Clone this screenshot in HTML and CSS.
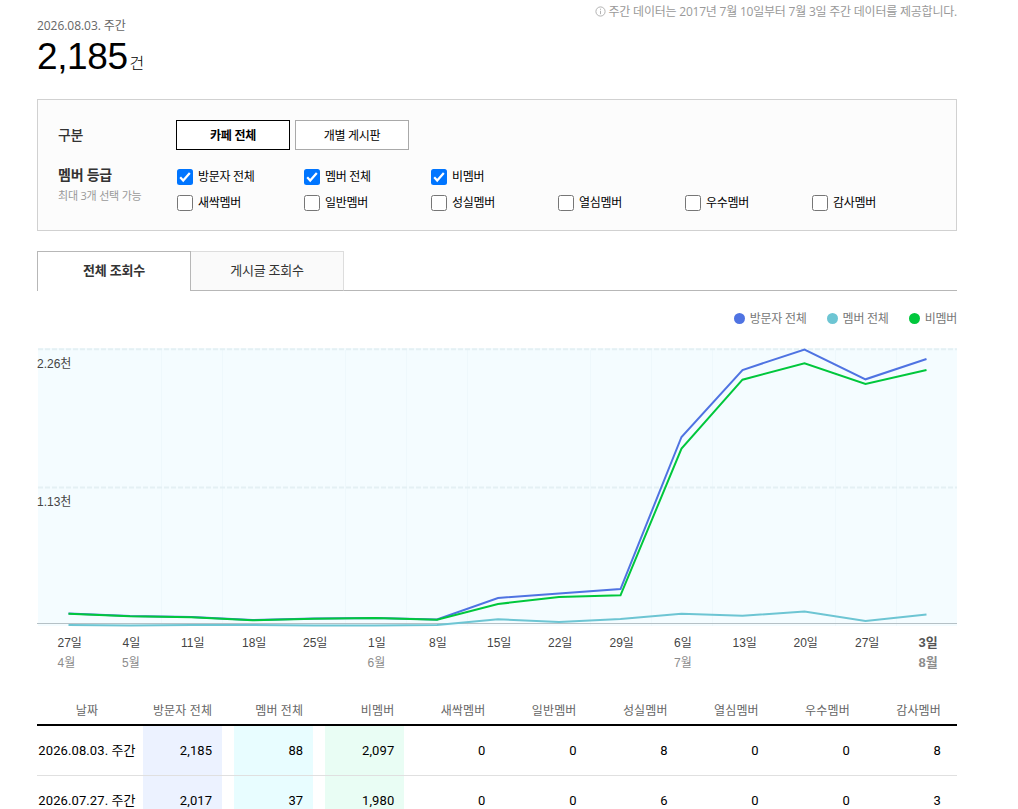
FILE: index.html
```html
<!DOCTYPE html>
<html lang="ko">
<head>
<meta charset="utf-8">
<title>조회수</title>
<link rel="stylesheet" href="styles.css">
</head>
<body>
<main class="page">
  <header class="head">
    <div class="summary">
      <p class="date">2026.08.03. 주간</p>
      <p class="total"><strong class="num">2,185</strong><span class="unit">건</span></p>
    </div>
    <p class="notice"><svg class="info" viewBox="0 0 11 11"><circle cx="5.5" cy="5.5" r="4.6"/><path d="M5.5 4.8v3.4M5.5 2.7v1.1"/></svg><span>주간 데이터는 2017년 7월 10일부터 7월 3일 주간 데이터를 제공합니다.</span></p>
  </header>

  <section class="filter">
    <div class="row">
      <h2 class="label">구분</h2>
      <div class="buttons"><button class="btn on">카페 전체</button><button class="btn">개별 게시판</button></div>
    </div>
    <div class="row grades">
      <div class="label"><h2>멤버 등급</h2><p class="hint">최대 3개 선택 가능</p></div>
      <div class="checks">
        <label class="check"><span class="box checked"><svg viewBox="0 0 16 16"><path d="M3.2 8.3l3 3.2L12.8 4"/></svg></span>방문자 전체</label>
        <label class="check"><span class="box checked"><svg viewBox="0 0 16 16"><path d="M3.2 8.3l3 3.2L12.8 4"/></svg></span>멤버 전체</label>
        <label class="check wide"><span class="box checked"><svg viewBox="0 0 16 16"><path d="M3.2 8.3l3 3.2L12.8 4"/></svg></span>비멤버</label>
        <label class="check"><span class="box"></span>새싹멤버</label>
        <label class="check"><span class="box"></span>일반멤버</label>
        <label class="check"><span class="box"></span>성실멤버</label>
        <label class="check"><span class="box"></span>열심멤버</label>
        <label class="check"><span class="box"></span>우수멤버</label>
        <label class="check"><span class="box"></span>감사멤버</label>
      </div>
    </div>
  </section>

  <nav class="tabs"><a class="tab active">전체 조회수</a><a class="tab">게시글 조회수</a><span class="rest"></span></nav>

  <div class="legend">
    <span class="key"><i class="dot blue"></i>방문자 전체</span>
    <span class="key"><i class="dot teal"></i>멤버 전체</span>
    <span class="key"><i class="dot green"></i>비멤버</span>
  </div>

  <svg class="chart" viewBox="37 340 921 340">
    <rect class="plot" x="38" y="348" width="919" height="278"/>
    <path class="cols" d="M161.5 350V626M222.5 350V626M345.5 350V626M406.5 350V626M467.5 350V626M590.5 350V626M651.5 350V626M712.5 350V626M835.5 350V626M896.5 350V626"/>
    <path class="grid" d="M38 349.3H957M38 487.5H957"/>
    <path class="base" d="M37 623.5H957"/>
    <polyline class="line blue" points="68.5,613.5 130,616 191.5,617 252.5,620 314,618.5 375,618 437,619.5 498,598 559,593.5 620.5,589 681.5,437 742.5,370 804.5,349.5 865.5,379.3 926.5,359"/>
    <polyline class="line teal" points="68.5,625 130,625.5 191.5,625 252.5,625 314,625.5 375,625.5 437,625 498,619.3 559,622 620.5,619 681.5,613.7 742.5,615.7 804.5,611.5 865.5,621 926.5,614.5"/>
    <polyline class="line green" points="68.5,613.7 130,616.3 191.5,617.3 252.5,620.3 314,618.7 375,618 437,619.7 498,604 559,597 620.5,595.3 681.5,448.5 742.5,379.7 804.5,363.3 865.5,384 926.5,370"/>
    <g class="ylab"><text x="37" y="368">2.26천</text><text x="37" y="506">1.13천</text></g>
    <g class="day">
      <text x="57.5" y="647">27일</text><text x="122.5" y="647">4일</text><text x="181" y="647">11일</text><text x="242" y="647">18일</text><text x="303" y="647">25일</text><text x="368" y="647">1일</text><text x="429" y="647">8일</text><text x="487" y="647">15일</text><text x="548" y="647">22일</text><text x="609.5" y="647">29일</text><text x="674" y="647">6일</text><text x="732.5" y="647">13일</text><text x="793.5" y="647">20일</text><text x="855" y="647">27일</text><text class="now" x="918.5" y="647">3일</text>
    </g>
    <g class="month"><text x="57.5" y="667">4월</text><text x="122" y="667">5월</text><text x="367.5" y="667">6월</text><text x="674" y="667">7월</text><text class="now" x="918.5" y="667">8월</text></g>
  </svg>

  <table class="data">
    <thead><tr><th class="when">날짜</th><th>방문자 전체</th><th>멤버 전체</th><th>비멤버</th><th>새싹멤버</th><th>일반멤버</th><th>성실멤버</th><th>열심멤버</th><th>우수멤버</th><th>감사멤버</th></tr></thead>
    <tbody>
      <tr><td class="when">2026.08.03. 주간</td><td><span class="fill f1">2,185</span></td><td><span class="fill f2">88</span></td><td><span class="fill f3">2,097</span></td><td>0</td><td>0</td><td>8</td><td>0</td><td>0</td><td>8</td></tr>
      <tr><td class="when">2026.07.27. 주간</td><td><span class="fill f1">2,017</span></td><td><span class="fill f2">37</span></td><td><span class="fill f3">1,980</span></td><td>0</td><td>0</td><td>6</td><td>0</td><td>0</td><td>3</td></tr>
    </tbody>
  </table>
</main>
</body>
</html>
```
FILE: styles.css
```css
* { box-sizing: border-box; }
html { height: 809px; overflow: hidden; }
body { margin: 0; height: 809px; overflow: hidden; background: #fff; color: #000; font: 12px/16px "Open Sans", "Noto Sans CJK KR", sans-serif; }
p, h2 { margin: 0; }
.page { width: 920px; margin-left: 37px; }

.head { display: flex; justify-content: space-between; height: 99px; }
.summary { padding-top: 18px; }
.date { color: #666; letter-spacing: -.05px; }
.total { display: flex; align-items: baseline; height: 44px; margin-top: 1px; line-height: 44px; }
.num { font: 37px/44px "Liberation Sans", sans-serif; letter-spacing: -.4px; }
.unit { margin-left: 2px; font-size: 16px; font-weight: 300; }
.notice { display: flex; gap: 3px; padding-top: 4px; color: #999; letter-spacing: -.22px; white-space: nowrap; }
.info { width: 11px; height: 11px; margin-top: 2px; fill: none; stroke: #aaa; stroke-width: .9; }

.filter { height: 132px; padding: 20px; border: 1px solid #d1d1d1; background: #fcfcfc; }
.row { display: flex; }
.label { width: 118px; flex: none; }
.row h2 { font-size: 14px; line-height: 30px; font-weight: 500; color: #333; letter-spacing: -.3px; }
.buttons { display: flex; gap: 5px; }
.btn { width: 114px; height: 30px; padding: 1px 0 0; border: 1px solid #a9a9a9; background: #fff; color: #000; font: inherit; letter-spacing: -.3px; }
.btn.on { border-color: #000; font-weight: 700; }
.grades { padding-top: 16px; }
.row.grades h2 { line-height: 18px; font-weight: 700; letter-spacing: -.25px; }
.hint { margin-top: 2px; font-size: 11px; line-height: 20px; color: #999; letter-spacing: -.2px; }
.checks { display: grid; grid-template-columns: repeat(6, 127px); grid-auto-rows: 26px; padding: 1px 0 0 1px; margin-right: -30px; }
.check { display: flex; gap: 5px; line-height: 20px; letter-spacing: -.3px; white-space: nowrap; }
.check.wide { grid-column: span 4; }
.box { width: 16px; height: 16px; margin-top: 2px; flex: none; border: 1px solid #767676; border-radius: 2.5px; background: #fff; }
.box.checked { border: 0; background: #0075ff; }
.box svg { display: block; fill: none; stroke: #fff; stroke-width: 2.2; }

.tabs { display: flex; height: 40px; margin-top: 20px; line-height: 37px; text-align: center; font-size: 13px; letter-spacing: -.2px; }
.tab { width: 153px; border: solid #ddd; border-width: 1px 1px 1px 0; border-bottom-color: #b7b7b7; background: #fafafa; color: #333; }
.tab.active { width: 154px; border: solid #b7b7b7; border-width: 1px 1px 0; background: #fff; font-weight: 700; }
.rest { flex: 1; border-bottom: 1px solid #b7b7b7; }

.legend { display: flex; justify-content: flex-end; gap: 20px; height: 49px; padding-top: 20px; color: #777; letter-spacing: -.25px; }
.key { display: flex; gap: 5px; }
.dot { width: 11px; height: 11px; margin-top: 2px; border-radius: 50%; }
.dot.blue { background: #4f73e2; }
.dot.teal { background: #6dc5d3; }
.dot.green { background: #00c73c; }

.chart { display: block; width: 921px; height: 340px; font: 12px "Liberation Sans", "Noto Sans CJK KR", sans-serif; }
.plot { fill: #f4fcff; }
.cols { stroke: #eef8fc; }
.grid { stroke: #e4f0f4; stroke-width: 2; stroke-dasharray: 5 2; }
.base { stroke: #b5c1c6; }
.line { fill: none; stroke-width: 2; }
.line.blue { stroke: #4f73e2; }
.line.teal { stroke: #6dc5d3; }
.line.green { stroke: #00c73c; }
.ylab, .day { fill: #444; }
.month { fill: #8c8c8c; }
.now { font-weight: 700; font-size: 13px; }
.day .now { fill: #555; }

.data { width: 920px; margin-top: 15px; border-collapse: separate; border-spacing: 0; table-layout: fixed; }
.data th { height: 31px; padding: 2px 16px 0 0; border-bottom: 2px solid #000; color: #666; font-weight: 400; text-align: right; letter-spacing: .15px; white-space: nowrap; }
.data td { height: 50px; padding: 0 16px 0 0; border-bottom: 1px solid #e0e0e0; font-family: Roboto, "Noto Sans CJK KR", sans-serif; font-size: 13px; letter-spacing: .1px; text-align: right; white-space: nowrap; }
.data th.when { padding: 2px 0 0; }
.data .when { width: 100px; padding-right: 0; text-align: center; }
.fill { display: block; height: 49px; margin: 0 -10px 0 6px; padding-right: 10px; line-height: 50px; }
.f1 { background: #ecf2ff; }
.f2 { background: #e8fdff; }
.f3 { background: #e9fdf4; }
```
